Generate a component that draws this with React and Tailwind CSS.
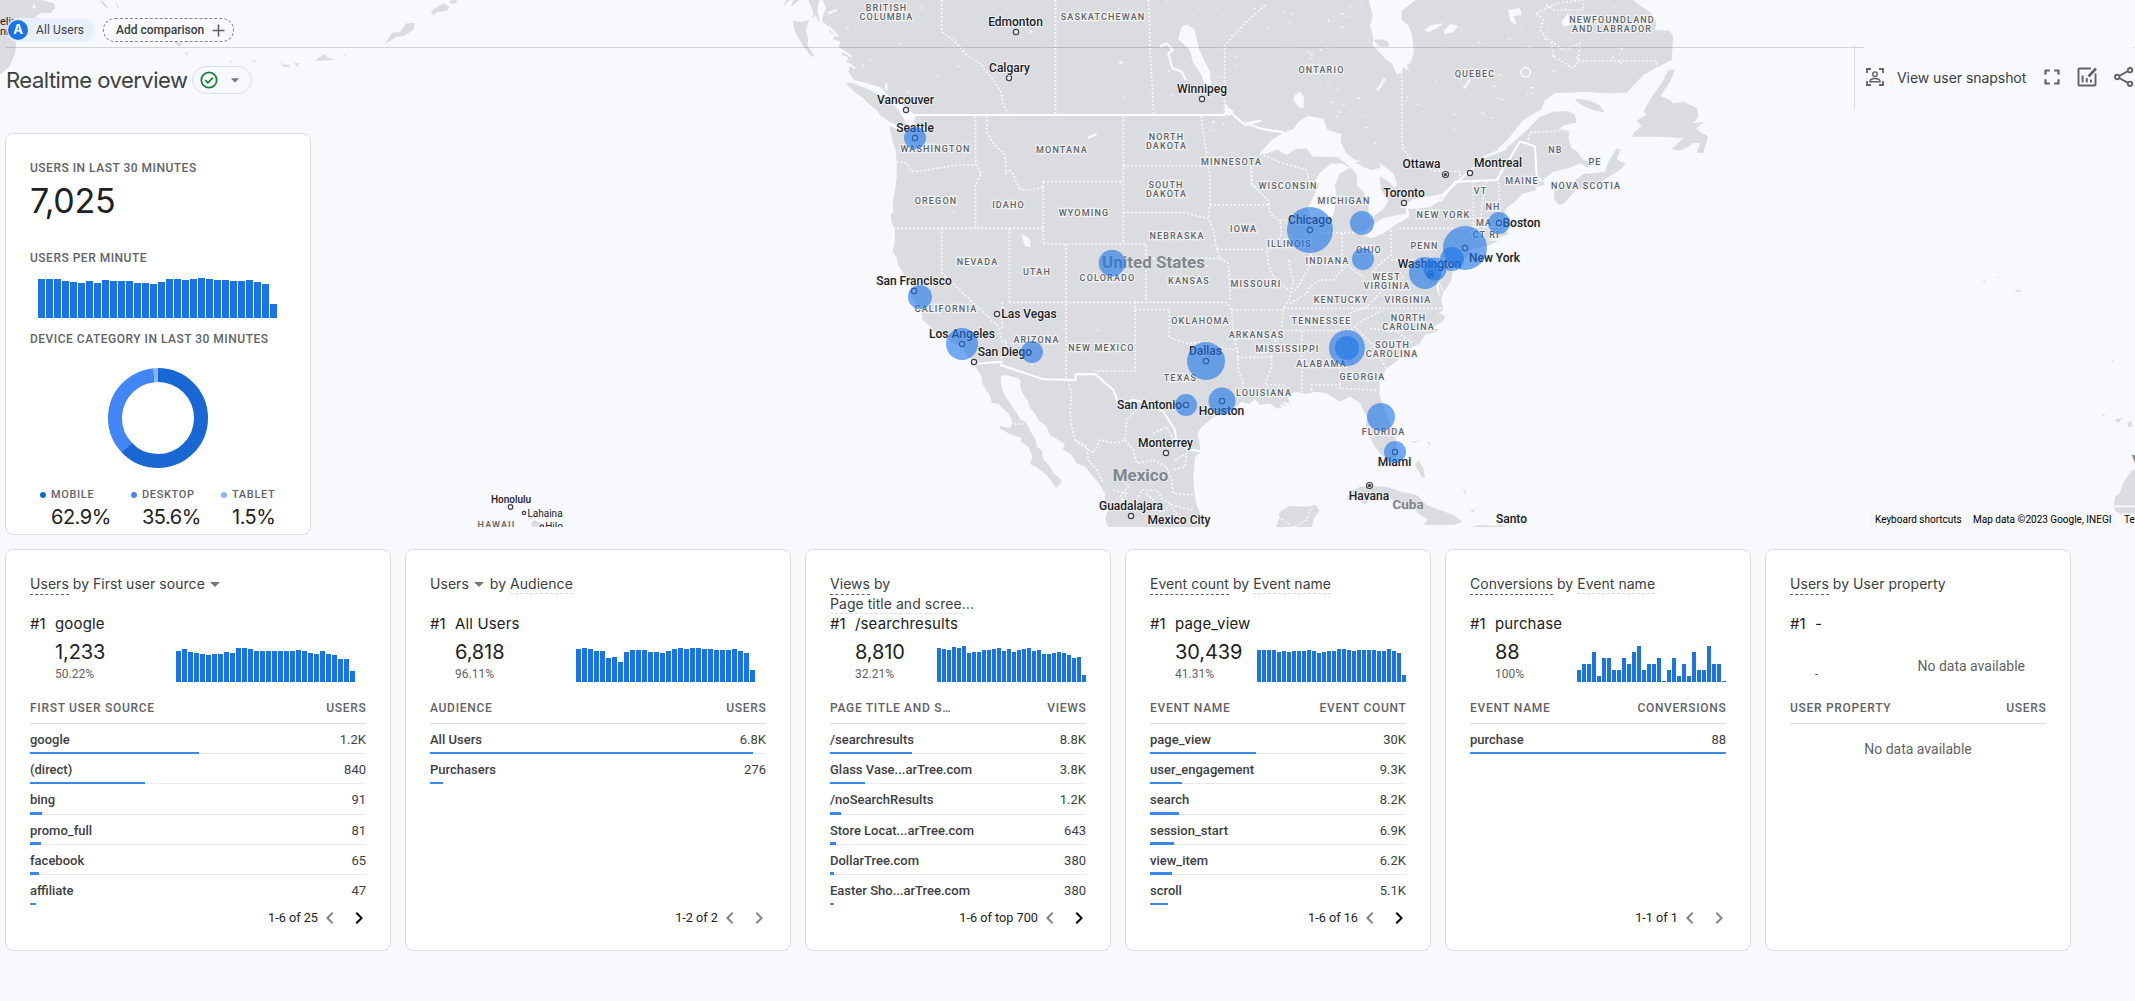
import React from "react";
import { MdChevronLeft, MdChevronRight, MdArrowDropDown, MdFullscreen } from "react-icons/md";

/* Map geometry is stored per tile at triple resolution; each tile has its own origin. */
const TILES = { A: [0, 0], NW: [2340, 0], NE: [3720, 0], SW: [2340, 780], SE: [3720, 780], P: [1260, 0], E: [5100, 0] };

function points(segments) {
  let out = "";
  for (let i = 0; i < segments.length; i += 2) {
    const [ox, oy] = TILES[segments[i]];
    out += segments[i + 1]
      .trim()
      .split(/\s+/)
      .map((p) => {
        const [x, y] = p.split(",").map(Number);
        return `${x + ox},${y + oy} `;
      })
      .join("");
  }
  return out;
}

const LAND = [
  [
    "NW", "128,0 138,25 130,45 126,62 150,85 148,95 165,105 160,118 182,125 175,140 190,150 185,165 205,172 200,188 212,195 205,215 222,240 262,250 300,262 330,290 365,312 390,332 408,346 402,362 408,380 398,398 388,385 370,392 328,378 332,400 340,430 348,455 350,490 350,530 345,570 338,610 340,635 332,645 336,670 344,690 345,720 338,755 350,772 356,810",
    "SW", "355,0 357,18 375,50 390,58 398,75 386,92 400,120 425,160 428,180 455,205 460,214 500,222 515,248 545,258 560,285 580,308 590,325 605,350 608,372 618,390 632,410 635,428 655,432 668,445 690,465 698,490 690,505 658,498 662,508 690,522 712,530 725,535 722,545 745,560 757,590 750,612 775,625 800,645 815,665 828,685 845,665 840,655 820,640 810,620 790,598 785,570 770,560 768,540 752,515 745,500 735,485 722,480 712,462 700,445 680,415 665,385 662,350 672,345 690,348 712,355 722,362 720,375 725,395 745,425 750,445 765,460 775,480 800,500 810,525 835,540 855,552 848,568 875,585 888,608 915,620 940,650 960,675 975,700 975,725 985,750 975,775 985,803 1262,803 1268,780 1250,735 1243,700 1240,650 1245,592 1262,575 1258,545 1252,520 1265,500 1290,480 1300,472 1330,462 1370,440 1385,425 1410,432",
    "SE", "30,430 45,418 60,435 90,430 112,446 125,442 120,432 140,438 125,425 150,430 140,405 165,395 200,402 225,395 260,400 300,425 330,410 360,430 372,455 382,470 376,500 390,530 405,560 420,580 440,598 458,603 470,590 468,540 450,490 432,440 418,405 420,365 440,325 475,300 490,275 540,250 555,225 590,215 595,208 575,205 600,190 615,175 612,165 595,160 610,150 604,120 610,95 596,70 600,110 590,90 590,50 612,95 635,60 638,30 625,10 660,10 690,-20",
    "NE", "690,750 750,735 775,722 745,722 780,710 800,705 810,700 795,695 790,660 798,625 825,605 850,580 890,570 885,560 915,555 908,540 940,515 985,505 1022,490 1040,502 1075,492 1030,480 1012,455 995,445 985,415 990,395 960,385 975,375 1010,368 1005,345 985,333 940,335 900,350 850,400 810,435 780,455 735,470 770,452 810,410 850,360 905,328 915,300 945,280 1040,275 1090,280 1160,278 1210,225 1255,200 1295,180 1300,110 1288,92 1245,90 1250,70 1230,35 1205,20 1180,0",
  ],
  ["NE", "942,570 1000,545 1030,522 1060,520 1095,515 1105,485 1130,445 1143,450 1130,475 1140,485 1158,488 1140,510 1090,540 1040,565 1010,568 990,590 970,612 955,614 942,598"],
  ["NE", "1285,210 1305,208 1290,245 1262,288 1290,300 1300,310 1330,305 1372,325 1375,350 1360,370 1392,365 1368,385 1385,400 1400,405 1403,415 1390,460 1370,458 1380,430 1362,428 1345,440 1320,452 1295,447 1330,415 1260,410 1175,410 1185,395 1205,378 1190,362 1218,345 1212,332 1235,290 1265,250"],
  ["NE", "1003,296 1045,300 1078,315 1095,338 1050,328 1020,312"],
  ["NE", "400,120 430,118 447,128 445,142 415,138"],
  ["NW", "197,249 225,245 240,258 262,265 312,290 350,322 368,350 385,382 365,380 328,365 300,345 290,330 262,308 248,292 225,278"],
  ["NW", "38,62 65,66 88,60 78,90 85,118 82,135 105,172 90,165 68,135 52,108 42,85"],
  ["NW", "0,-2 18,0 10,22 30,-2 40,0 32,22 60,-2 118,-2 112,30 120,70 105,45 95,60 100,38 85,0"],
  ["SE", "118,755 150,738 200,740 228,735 238,752 222,775 215,803 108,803 116,780"],
  ["SE", "318,722 330,695 360,680 390,677 440,680 490,697 530,705 560,735 600,750 640,765 668,785 640,795 550,795 565,778 540,765 520,742 480,735 450,715 400,705 375,735 360,722 345,708"],
  ["SE", "525,615 535,600 550,625 555,652 545,650"],
  ["SE", "512,545 545,541 520,549"],
  ["SE", "555,543 572,548 565,573 568,552"],
  ["SE", "688,752 708,748 700,756"],
  ["SE", "695,800 720,795 760,797 790,795 800,803 695,803"],
  ["SE", "660,688 680,692 676,707 672,693"],
  ["A", "0,0 125,0 162,10 166,24 152,38 120,40 98,58 62,78 50,105 46,160 28,200 0,224"],
  ["A", "300,0 312,18 326,26 310,4"],
  ["A", "345,0 352,22 360,28"],
  ["A", "522,126 548,128 538,141"],
  ["A", "555,156 566,160 560,166"],
  ["A", "758,180 768,184 762,189"],
  ["A", "686,186 698,180 692,188"],
  ["A", "840,186 850,194 870,194 866,202 848,200"],
  ["A", "884,188 898,190 888,202"],
  ["A", "945,182 972,162 982,172 1006,180 960,182"],
  ["A", "1030,163 1038,167 1032,168"],
  ["A", "1155,132 1176,98 1200,96 1220,70 1244,68 1240,90 1212,108 1190,110"],
  ["P", "32,38 50,20 72,10 88,20 80,32 50,36 42,46"],
  ["P", "88,4 98,0 112,0 108,10 92,12"],
  ["P", "335,1565 345,1560 360,1568 372,1580 335,1580"],
  ["E", "1241,1520 1246,1488 1258,1482 1270,1450 1284,1425 1306,1405 1306,1542 1262,1542 1245,1532"],
  ["E", "848,842 860,843 860,846 850,846"],
  ["E", "888,832 894,829 896,835"],
  ["E", "946,870 963,869 962,875 946,875"],
  ["E", "1233,1080 1244,1083 1242,1088"],
  ["E", "1206,1242 1216,1243 1210,1250"],
  ["E", "1243,1260 1268,1251 1255,1269"],
  ["E", "1282,1265 1294,1264 1296,1280 1285,1280"],
];

const WATER = [
  ["NE", "385,-2 398,45 390,80 400,110 398,135 440,180 455,190 470,222 485,218 490,200 508,215 500,195 512,190 522,155 515,100 505,75 485,60 485,32 530,-2"],
  ["NE", "60,460 95,420 130,398 160,388 175,365 205,348 250,357 262,390 305,403 302,425 318,458 345,480 390,492 420,490 460,520 472,555 462,562 440,540 418,530 425,572 445,602 430,628 405,645 398,660 388,652 385,620 370,575 352,558 350,525 330,500 295,472 250,470 218,470 200,445 165,448 140,465 110,448 80,462"],
  ["NE", "215,560 240,518 272,492 305,490 330,503 300,520 285,555 290,598 280,645 262,668 235,678 210,668 203,625 218,595 240,548"],
  ["NE", "362,705 392,678 430,655 470,645 505,640 507,652 470,672 430,700 395,714"],
  ["NE", "478,622 522,597 560,590 600,583 602,600 570,622 520,627"],
  ["NE", "165,285 180,275 192,290 190,325 175,320 160,300"],
  ["NE", "805,30 840,25 845,45 822,48 830,75 812,65"],
  ["NE", "552,90 575,75 612,70 590,85 565,97"],
  ["NE", "610,92 632,72 655,78 640,95 615,103"],
  ["NE", "965,65 985,40 992,75 970,80"],
  ["NW", "1205,80 1222,74 1243,88 1258,150 1290,215 1294,255 1275,258 1265,225 1238,185 1230,150 1195,118"],
  ["NW", "723,703 740,708 752,722 750,742 735,738"],
  ["NW", "1335,308 1345,325 1362,332 1350,348 1335,343"],
  ["NW", "922,412 952,396 948,408 925,416"],
  ["NW", "1012,188 1030,182 1026,192"],
  ["A", "95,22 102,10 108,25"],
];

const DOTTED = [
  ["NW", "485,0 485,95 530,130 560,165 600,190 640,240 665,280 668,310 685,343"],
  ["NW", "827,0 827,343"],
  ["NW", "1105,0 1108,60 1110,150 1117,260 1121,343"],
  ["NW", "1455,15 1390,75 1335,135 1333,343"],
  ["NW", "587,347 587,495"],
  ["NW", "350,485 380,490 395,515 440,510 500,500 540,495 590,495 603,520 585,560 587,595 587,685"],
  ["NW", "620,347 622,400 640,430 675,465 678,520 692,512 705,535 720,568 745,570 790,562"],
  ["NW", "790,545 1030,545"],
  ["NW", "1030,347 1030,730"],
  ["NW", "790,545 790,730"],
  ["NW", "340,685 790,685"],
  ["NW", "790,732 1098,732 1098,775 1325,775"],
  ["NW", "1030,498 1283,498"],
  ["NW", "1263,347 1270,400 1280,460 1283,498 1290,530 1290,615 1285,655"],
  ["NW", "1030,638 1220,638 1250,648 1285,655 1300,690 1310,745 1320,775 1345,790 1352,905"],
  ["NW", "1290,615 1470,615"],
  ["NW", "1310,748 1450,748"],
  ["NW", "485,685 485,818"],
  ["NW", "688,685 688,907"],
  ["NW", "858,732 858,1138"],
  ["NW", "1098,775 1098,907"],
  ["NW", "1412,490 1415,550 1440,570"],
  ["NE", "485,215 487,440 505,470 580,512 660,515 660,540"],
  ["NE", "60,462 130,490 200,510 210,555"],
  ["NE", "35,500 35,555 85,600 90,640 120,665 125,700 105,740 80,750 85,790 100,830 145,870"],
  ["NE", "120,660 205,660"],
  ["NE", "213,700 213,790 180,850 160,880"],
  ["NE", "240,698 375,698"],
  ["NE", "307,700 307,810"],
  ["NE", "453,690 453,765 410,800 390,830"],
  ["NE", "478,685 680,685 700,705"],
  ["NE", "453,780 610,780"],
  ["NE", "697,545 700,600 700,690"],
  ["NE", "740,545 725,620 722,680"],
  ["NE", "775,535 780,640"],
  ["NE", "700,680 780,680"],
  ["NE", "1015,183 1250,183 1250,210"],
  ["NE", "890,40 910,60 900,90 935,130 940,170 1000,205 1015,183 1020,130 970,150 935,125"],
  ["NE", "890,40 950,10 1030,0 1030,30 940,30 915,10"],
  ["NE", "865,420 870,398 930,395 970,390"],
  ["SW", "485,38 560,110 655,200 667,245 680,240 660,310"],
  ["SW", "667,205 667,127"],
  ["SW", "688,127 1340,127 1355,150 1358,210 1372,270 1375,330 1390,370 1385,400"],
  ["SW", "1065,127 1065,333 945,333"],
  ["SW", "1065,148 1168,148 1168,232 1220,250 1280,245 1330,265 1372,270"],
  ["SW", "1355,150 1505,150"],
  ["SW", "1372,292 1475,292"],
  ["SW", "865,360 875,400 870,450 875,500 885,540 920,560 925,600 950,630 970,670"],
  ["SW", "885,540 940,580 960,540 1010,550 1035,540 1040,480 1070,450"],
  ["SW", "1035,540 1060,570 1070,610 1120,600 1160,620 1175,660 1180,700 1240,705"],
  ["SW", "1120,520 1160,500 1185,545"],
  ["SW", "1185,600 1220,580 1215,620 1180,630"],
  ["SW", "1000,690 1040,700 1030,720 1060,740 1085,690 1130,690 1150,720 1190,740 1240,750"],
  ["SW", "1040,740 1020,710 1045,680 1025,660"],
  ["SW", "1100,700 1130,730 1110,745 1150,755 1170,735 1195,770 1225,780"],
  ["SW", "690,492 730,492"],
  ["SE", "145,0 160,60 150,110 130,150 125,200 95,270 95,320 75,375 135,375"],
  ["SE", "130,145 605,145"],
  ["SE", "130,212 330,212 370,180 420,155"],
  ["SE", "185,212 185,395"],
  ["SE", "300,212 300,385 410,390"],
  ["SE", "215,390 215,375 300,375"],
  ["SE", "390,205 470,215 520,250"],
  ["SE", "350,205 410,270 440,330"],
  ["SE", "150,130 200,100 210,80 240,60 280,60 320,15 370,50"],
  ["SE", "330,160 380,140 440,80 490,50"],
  ["SE", "115,770 160,803 200,780 215,740"],
];

const SOLID = [
  ["NW", "408,345 1335,345 1345,325 1360,345 1395,375 1440,362", "NE", "20,370 60,385 95,392 130,396"],
  ["NE", "500,625 505,645"],
  ["NE", "600,605 645,545 770,540 800,490 840,425 860,430 885,440 890,525 905,545"],
  ["SW", "582,312 665,305 662,315 790,358 887,360 887,343 945,342 1000,390 1015,430 1060,420 1110,430 1150,455 1185,510 1190,550 1230,570 1262,573"],
];

const RIVERS = [
  ["NE", "600,590 650,548 735,470 800,445"],
  ["NW", "1140,140 1160,130 1178,150 1165,160 1178,205 1205,215 1218,240"],
  ["NW", "200,240 262,262 330,300 385,350"],
  ["NW", "380,345 392,372 388,395"],
  ["NW", "320,270 318,250"],
  ["NW", "215,170 185,150"],
  ["NW", "225,205 205,190"],
  ["NW", "175,110 145,80"],
  ["NW", "145,40 170,30"],
  ["NE", "672,265 690,238"],
  ["NE", "412,272 435,235"],
];

/* Deterministic scatter of small northern lakes. */
function lakes() {
  let s = 7;
  const rnd = () => {
    s = (s * 16807) % 2147483647;
    return s / 2147483647;
  };
  const zones = [
    [3480, 3720, 5, 420, 46],
    [3720, 4090, 5, 340, 62],
    [4260, 4640, 5, 400, 80],
    [4640, 4960, 10, 250, 46],
    [2520, 3400, 10, 320, 40],
    [4000, 4250, 260, 480, 14],
    [2760, 3700, 360, 1000, 16],
  ];
  const out = [];
  zones.forEach(([x0, x1, y0, y1, n]) => {
    for (let i = 0; i < n; i++) {
      const x = x0 + rnd() * (x1 - x0);
      const y = y0 + rnd() * (y1 - y0);
      const a = rnd() * 18 - 6;
      const b = rnd() * 16 - 8;
      out.push(`M${x.toFixed(0)} ${y.toFixed(0)}l${a.toFixed(0)} ${b.toFixed(0)}l${(b / 2 + 4).toFixed(0)} ${(a / 3 + 2).toFixed(0)}z`);
    }
  });
  return out.join("");
}
const LAKES = lakes();

const STATES = [
  ["BRITISH", 886, 11], ["COLUMBIA", 886, 20], ["SASKATCHEWAN", 1102.5, 20], ["ONTARIO", 1321, 73], ["QUEBEC", 1474.5, 77],
  ["NEWFOUNDLAND", 1611.5, 23], ["AND LABRADOR", 1611.5, 32], ["WASHINGTON", 935, 152], ["MONTANA", 1061.5, 153],
  ["NORTH", 1166, 140], ["DAKOTA", 1166, 149], ["MINNESOTA", 1231, 165], ["SOUTH", 1165.5, 188], ["DAKOTA", 1166, 197],
  ["OREGON", 935.5, 204], ["IDAHO", 1008, 208], ["WYOMING", 1083.5, 216], ["NEBRASKA", 1176.5, 239], ["IOWA", 1243, 232],
  ["NEVADA", 977, 265], ["UTAH", 1036.5, 275], ["COLORADO", 1107, 281], ["KANSAS", 1188.5, 284], ["MISSOURI", 1255.5, 287],
  ["CALIFORNIA", 945.5, 312], ["ARIZONA", 1036, 343], ["NEW MEXICO", 1101, 351], ["OKLAHOMA", 1200, 324], ["ARKANSAS", 1256, 338],
  ["TEXAS", 1180, 381], ["LOUISIANA", 1263.5, 396], ["MISSISSIPPI", 1287, 352], ["ALABAMA", 1321, 367], ["GEORGIA", 1362, 380],
  ["TENNESSEE", 1321, 324], ["KENTUCKY", 1340.5, 303], ["VIRGINIA", 1407.5, 303], ["WEST", 1386, 280], ["VIRGINIA", 1386.5, 289],
  ["NORTH", 1408, 321], ["CAROLINA", 1408, 330], ["SOUTH", 1392, 348], ["CAROLINA", 1391.5, 357], ["FLORIDA", 1383, 435],
  ["WISCONSIN", 1287.5, 189], ["MICHIGAN", 1343.5, 204], ["ILLINOIS", 1289, 247], ["INDIANA", 1327, 264], ["OHIO", 1368.5, 253],
  ["PENN", 1424, 249], ["NEW YORK", 1443, 218], ["VT", 1480, 194], ["NH", 1492.5, 210], ["MA", 1483.5, 226], ["CT", 1479, 238],
  ["RI", 1494, 238], ["MAINE", 1521.5, 184], ["NB", 1555, 153], ["PE", 1594.5, 165], ["NOVA SCOTIA", 1585.5, 189], ["HAWAII", 496, 528],
];

/* name, text centre x, baseline y, marker x, marker y, capital */
const CITIES = [
  ["Edmonton", 1015.5, 26, 1016, 32], ["Calgary", 1009.5, 72, 1009, 78], ["Winnipeg", 1202, 93, 1202, 99],
  ["Vancouver", 905.5, 104, 906, 110], ["Seattle", 915, 132, 915, 138], ["San Francisco", 914, 285, 914, 291],
  ["Las Vegas", 1029, 318, 997, 314], ["Los Angeles", 962, 338, 962, 344], ["San Diego", 1005, 356, 974, 362],
  ["Dallas", 1205.5, 355, 1206, 361], ["San Antonio", 1149.5, 409, 1186, 405], ["Houston", 1221.5, 415, 1222, 401],
  ["Monterrey", 1165.5, 447, 1166, 453], ["Guadalajara", 1131, 510, 1131, 516], ["Mexico City", 1179, 524],
  ["Chicago", 1310, 224, 1310, 230], ["Ottawa", 1421.5, 168, 1445.5, 174.5, true], ["Montreal", 1498, 167, 1470, 173],
  ["Toronto", 1404, 197, 1404, 203], ["Boston", 1521.5, 227, 1499, 223], ["New York", 1494.5, 262, 1465, 248],
  ["Washington", 1429.5, 268, 1430.5, 274.5, true], ["Miami", 1394.5, 466, 1395, 452], ["Havana", 1369, 500, 1369.5, 485.5, true],
  ["Santo", 1511.5, 523],
];

const BUBBLES = [
  [915, 138, 11], [1112, 263, 13.3], [1310, 230, 23], [1362, 223, 12], [1363, 259, 11], [1465, 248, 22], [1452, 259, 12],
  [1499, 223, 11], [1425, 273, 16], [1435, 269, 11.5], [920, 297, 12], [962, 344, 16], [1032, 352, 11], [1206, 361, 19],
  [1186, 405, 11], [1222, 401, 13.5], [1347, 348, 18], [1347, 348, 12], [1381, 417, 14], [1395, 452, 11],
];

function WorldMap() {
  const halo = { paintOrder: "stroke" };
  return (
    <svg className="absolute left-0 top-0 font-['Roboto',sans-serif]" width="2135" height="527" viewBox="0 0 2135 527">
      <g transform="scale(0.33333)" fill="none" strokeLinejoin="round">
        {LAND.map((p, i) => <polygon key={i} points={points(p)} fill="#dadce0" />)}
        <path d={LAKES} fill="#f8f9fc" />
        <circle cx="4577" cy="217" r="14" stroke="#f8f9fc" strokeWidth="5" />
        {WATER.map((p, i) => <polygon key={i} points={points(p)} fill="#f8f9fc" />)}
        <polygon points={points(LAND[4])} fill="#dadce0" />
        <polygon points={points(["NE", "345,486 372,484 420,492 422,503 395,510 368,500"])} fill="#dadce0" />
        {RIVERS.map((p, i) => <polyline key={i} points={points(p)} stroke="#f8f9fc" strokeWidth="7" />)}
        {DOTTED.map((p, i) => <polyline key={i} points={points(p)} stroke="#f8f9fc" strokeWidth="5" strokeDasharray="6 6" />)}
        {SOLID.map((p, i) => <polyline key={i} points={points(p)} stroke="#ffffff" strokeWidth="6" />)}
        <path d="M6341 1519H6405" stroke="#f8f9fc" strokeWidth="5" />
      </g>
      <g fill="#5f6368" fontSize="9" fontWeight="500" letterSpacing="1.15" textAnchor="middle" stroke="#f1f3f4" strokeWidth="2.4" style={halo}>
        {STATES.map(([t, x, y], i) => <text key={i} x={x + 0.5} y={y} style={halo}>{t}</text>)}
      </g>
      <g fill="#80868b" fontWeight="700" textAnchor="middle" stroke="#e8eaed" strokeWidth="1.5">
        <text x="1153.5" y="268" fontSize="17" style={halo}>United States</text>
        <text x="1140.5" y="481" fontSize="17" style={halo}>Mexico</text>
        <text x="1408" y="509" fontSize="13.5" style={halo}>Cuba</text>
        <text x="2132" y="464" fontSize="13.5" textAnchor="start" style={halo}>V</text>
      </g>
      <g fill="none" stroke="#3c4043" strokeWidth="1.2">
        {CITIES.filter((c) => c[3]).map((c, i) => (
          <React.Fragment key={i}>
            <circle cx={c[3]} cy={c[4]} r={c[5] ? 3 : 2.6} fill="#f1f3f4" />
            {c[5] && <circle cx={c[3]} cy={c[4]} r="1" fill="#202124" />}
          </React.Fragment>
        ))}
        <circle cx="510.500" cy="507" r="2.3" />
        <circle cx="524" cy="513" r="1.7" />
        <circle cx="542" cy="526.500" r="1.7" />
      </g>
      <g fill="#202124" fontSize="12" fontWeight="500" textAnchor="middle" stroke="#f1f3f4" strokeWidth="1.6">
        {CITIES.map(([t, x, y], i) => <text key={i} x={x} y={y} style={halo}>{t}</text>)}
      </g>
      <g fill="#202124" fontSize="10" textAnchor="middle">
        <text x="511" y="502.500" fontWeight="500">Honolulu</text>
        <text x="545" y="516.500">Lahaina</text>
        <text x="554" y="530">Hilo</text>
        <text x="0" y="25" textAnchor="start" fontSize="11">elin</text>
        <text x="0" y="35" textAnchor="start" fontSize="11">nu</text>
      </g>
      <g fill="#1a73e8" fillOpacity="0.6">
        {BUBBLES.map(([x, y, r], i) => <circle key={i} cx={x} cy={y} r={r} />)}
      </g>
    </svg>
  );
}

function Spark({ data, bar }) {
  return (
    <div className="flex items-end gap-px">
      {data.map((h, i) => (
        <div key={i} className={`${bar} bg-[#1a73e8]`} style={{ height: h }} />
      ))}
    </div>
  );
}

const GS = "font-['Inter',sans-serif]";

function Donut() {
  const c = 2 * Math.PI * 43;
  const arcs = [["#1967d2", 0, 0.629], ["#4285f4", 0.629, 0.356], ["#8ab4f8", 0.985, 0.015]];
  return (
    <svg width="100" height="100" viewBox="0 0 100 100" className="mx-auto">
      {arcs.map(([col, start, len]) => (
        <circle key={col} cx="50" cy="50" r="43" fill="none" stroke={col} strokeWidth="14"
          strokeDasharray={`${len * c} ${c}`} transform={`rotate(${start * 360 - 90} 50 50)`} />
      ))}
    </svg>
  );
}

function Label({ children, className = "" }) {
  return <div className={`whitespace-nowrap text-[12px] font-medium leading-4 tracking-[0.5px] text-[#5f6368] ${className}`}>{children}</div>;
}

function UsersCard() {
  const legend = [["MOBILE", "62.9%", "bg-[#1967d2]", "w-[91px]"], ["DESKTOP", "35.6%", "bg-[#4285f4]", "w-[90px]"], ["TABLET", "1.5%", "bg-[#8ab4f8]", "w-[60px]"]];
  return (
    <section className="h-[402px] w-[306px] rounded-lg border border-[#dadce0] bg-white px-6 pt-[26px]">
      <Label>USERS IN LAST 30 MINUTES</Label>
      <div className={`mt-[5px] h-10 text-[34px] leading-10 tracking-[-0.3px] text-[#202124] ${GS}`}>7,025</div>
      <Label className="mt-[29px]">USERS PER MINUTE</Label>
      <div className="mt-3 pl-2">
        <Spark bar="w-[7px]" data={[39, 39, 39, 37, 36, 35, 37, 35, 38, 37, 37, 37, 35, 35, 34, 36, 39, 39, 38, 39, 40, 39, 38, 38, 37, 37, 38, 36, 34, 14]} />
      </div>
      <Label className="mt-[13px]">DEVICE CATEGORY IN LAST 30 MINUTES</Label>
      <div className="mt-[20.5px]"><Donut /></div>
      <div className="mt-[19px] flex pl-[10px]">
        {legend.map(([n, v, dot, w]) => (
          <div key={n} className={w}>
            <div className="flex items-center gap-[5px]">
              <span className={`size-1.5 rounded-full ${dot}`} />
              <span className="text-[11px] font-medium leading-4 tracking-[0.65px] text-[#5f6368]">{n}</span>
            </div>
            <div className={`mt-[2px] pl-[11px] text-[20px] leading-6 tracking-[-0.5px] text-[#202124] ${GS}`}>{v}</div>
          </div>
        ))}
      </div>
    </section>
  );
}

function Term({ children, faint }) {
  return (
    <span className={`-mb-0.5 inline-block box-content border-b border-dashed align-top leading-5 ${faint ? "h-[19px] border-[#dadce0]" : "h-5 border-[#5f6368]"}`}>{children}</span>
  );
}

function Title({ children }) {
  return <div className={`h-10 whitespace-nowrap text-[14px] leading-5 tracking-[0.04px] text-[#3c4043] ${GS}`}>{children}</div>;
}

function MetricCard({ width, title, name, value, pct, bars, bar = "w-1", cols, rows, pager, more }) {
  return (
    <section className={`flex h-[402px] shrink-0 flex-col rounded-lg border border-[#dadce0] bg-white px-6 pt-6 ${width}`}>
      <Title>{title}</Title>
      <div className={`flex h-5 whitespace-nowrap text-[15px] leading-5 text-[#202124] ${GS}`}>
        <span className="w-[25px]">#1</span>
        <span className="tracking-[0.15px]">{name}</span>
      </div>
      <div className="flex h-12 items-end justify-between">
        <div className="self-start pl-[25px] pt-1.5">
          <div className={`h-6 text-[20px] leading-6 tracking-[-0.1px] text-[#202124] ${GS}`}>{value}</div>
          <div className={`mt-[2px] text-[12px] leading-4 text-[#5f6368] ${bars ? "" : "-mt-px"}`}>{pct}</div>
        </div>
        {bars ? (
          <div className={bar === "w-[5px]" ? "pr-[11px]" : ""}><Spark bar={bar} data={bars} /></div>
        ) : (
          <div className="mb-[6px] mr-[21px] text-[14px] leading-5 text-[#5f6368]">No data available</div>
        )}
      </div>
      <div className="mt-[18px] flex h-6 justify-between border-b border-[#dadce0] text-[12px] font-medium leading-4 tracking-[0.7px] text-[#5f6368]">
        <span>{cols[0]}</span>
        <span className="-mr-[0.5px]">{cols[1]}</span>
      </div>
      {rows.map(([n, v, p], i) => (
        <div key={n} className="flex h-[30.2px] flex-col justify-between">
          <div className="flex justify-between pt-1.5 text-[13px] leading-5">
            <span className="font-medium text-[#3c4043]">{n}</span>
            <span className="text-[#3c4043]">{v}</span>
          </div>
          <div className={`flex h-[3px] items-end border-b ${i < rows.length - 1 ? "border-[#e8eaed]" : "border-transparent"}`}>
            <div className="-mb-px h-[2.5px] shrink-0 bg-[#1a73e8]/85" style={{ width: `${p}%` }} />
          </div>
        </div>
      ))}
      {rows.length === 0 && <div className="mt-[15px] text-center text-[14px] leading-5 text-[#5f6368]">No data available</div>}
      {pager && (
        <div className="mb-[20px] -mr-[5px] mt-auto flex h-6 items-center justify-end text-[12.7px] text-[#202124]">
          <span>{pager}</span>
          <MdChevronLeft className="size-6 text-[#80868b]" />
          <MdChevronRight className={`ml-[5px] size-6 ${more ? "text-black" : "text-[#80868b]"}`} />
        </div>
      )}
    </section>
  );
}

const Caret = () => <span className="mb-[2px] ml-[5px] mr-[2px] inline-block border-x-[5px] border-t-[5px] border-x-transparent border-t-[#757575]" />;

export default function App() {
  return (
    <div className="relative h-[1001px] w-[2135px] overflow-hidden bg-[#f8f9fc] font-['Roboto',sans-serif]">
      <WorldMap />
      <div className="relative flex h-[549px] flex-col pl-[5px]">
        <div className="flex h-[47px] shrink-0 items-end gap-2 pb-[5px] pl-[2px] text-[12px]">
          <div className="flex h-6 w-[88px] items-center gap-2 rounded-full bg-[#e8f0fe] pl-px text-[#3c4043]">
            <span className={`flex size-5 items-center justify-center rounded-full bg-[#1a73e8] text-[13px] font-bold text-white ${GS}`}>A</span>
            <span className="tracking-[0.1px]">All Users</span>
          </div>
          <div className="flex h-6 w-[131px] items-center justify-between rounded-full border border-dashed border-[#80868b] pl-[12px] pr-[8px] font-medium text-[#3c4043]">
            <span>Add comparison</span>
            <svg width="13" height="13" viewBox="0 0 13 13" stroke="#5f6368" strokeWidth="1.6"><path d="M6.500 .5v12M.5 6.500h12" /></svg>
          </div>
        </div>
        <div className="flex shrink-0">
          <div className="ml-px h-px w-[1858px] bg-black/15" />
          <div className="ml-auto h-px w-[2px] bg-[#dadce0]" />
        </div>
        <div className="flex h-[85px] shrink-0 justify-between">
          <div className="mt-[18px] flex h-7 items-center pl-[1px]">
            <h1 className={`w-[186px] whitespace-nowrap text-[22px] leading-7 tracking-[-0.5px] text-[#3c4043] ${GS}`}>Realtime overview</h1>
            <div className="flex h-7 w-[60px] shrink-0 items-center justify-between rounded-full border border-[#dadce0] pl-[7px] pr-1.5">
              <svg width="18" height="18" viewBox="0 0 18 18" fill="none" stroke="#188038" strokeWidth="1.700"><circle cx="9" cy="9" r="7.700" /><path d="M5.200 9.200l2.700 2.700 5-5.200" /></svg>
              <MdArrowDropDown className="size-5 text-[#757575]" />
            </div>
          </div>
          <div className="-mt-[3px] flex h-16 w-[281px] items-center border-l border-[#dadce0] pl-[11px] text-[#5f6368]">
            <svg className="shrink-0" width="18" height="18" viewBox="0 0 18 18" fill="none" stroke="currentColor" strokeWidth="1.800">
              <path d="M1 5V1h4M13 1h4v4M17 13v4h-4M5 17H1v-4" />
              <circle cx="9" cy="6.200" r="2.300" strokeWidth="1.400" />
              <path d="M3.900 13.700c0-2.600 3-3.200 5.100-3.200s5.100.6 5.100 3.200z" strokeWidth="1.400" />
            </svg>
            <span className={`ml-[13px] w-[129px] shrink-0 whitespace-nowrap text-[14px] tracking-[-0.05px] text-[#3c4043] ${GS}`}>View user snapshot</span>
            <MdFullscreen className="ml-[13px] size-[26px] shrink-0" />
            <svg className="ml-[12px] shrink-0" width="21" height="20" viewBox="0 0 21 20" fill="none" stroke="currentColor" strokeWidth="1.900">
              <path d="M14 1.500H2.500a1 1 0 0 0-1 1v15a1 1 0 0 0 1 1h15a1 1 0 0 0 1-1V6.500" />
              <path d="M5.600 8.500v7M9.800 11v4.500M14 12.500v3" />
              <path d="M11.500 9.500l7.500-8" strokeWidth="2.600" />
            </svg>
            <svg className="ml-[16px] shrink-0" width="20" height="20" viewBox="0 0 20 20" fill="none" stroke="currentColor" strokeWidth="1.900">
              <circle cx="3.200" cy="10" r="2.200" /><circle cx="16" cy="3.200" r="2.200" /><circle cx="16" cy="16.800" r="2.200" />
              <path d="M5.200 9l8.800-4.800M5.200 11l8.800 4.800" />
            </svg>
          </div>
        </div>
        <UsersCard />
        <div className="absolute right-0 top-[513px] flex h-[14px] gap-px text-[10px] leading-[14px] text-black">
          <span className="w-[97px] whitespace-nowrap bg-[#f5f5f5]/80 pl-[5px]">Keyboard shortcuts</span>
          <span className="w-[150px] whitespace-nowrap bg-[#f5f5f5]/80 pl-[5px]">Map data ©2023 Google, INEGI</span>
          <span className="ml-[3px] w-[13px] overflow-hidden bg-[#f5f5f5]/80 pl-[2px]">Te</span>
        </div>
      </div>

      <main className="relative flex gap-[14px] pl-[5px]">
        <MetricCard width="w-[386px]" title={<><Term>Users</Term> by First user source<Caret /></>} name="google" value="1,233" pct="50.22%" bar="w-[5px]"
          bars={[31, 33, 30, 29, 28, 27, 28, 28, 30, 29, 34, 34, 33, 31, 31, 31, 31, 31, 31, 31, 32, 31, 29, 28, 31, 28, 27, 23, 23, 11]}
          cols={["FIRST USER SOURCE", "USERS"]} pager="1-6 of 25" more
          rows={[["google", "1.2K", 50.2], ["(direct)", "840", 34.2], ["bing", "91", 3.7], ["promo_full", "81", 3.3], ["facebook", "65", 2.6], ["affiliate", "47", 1.9]]} />
        <MetricCard width="w-[386px]" title={<>Users<Caret /> by <Term faint>Audience</Term></>} name="All Users" value="6,818" pct="96.11%" bar="w-[5px]"
          bars={[33, 34, 33, 31, 31, 24, 25, 20, 30, 32, 32, 32, 30, 30, 29, 31, 33, 34, 33, 34, 34, 33, 33, 32, 32, 32, 33, 31, 29, 12]}
          cols={["AUDIENCE", "USERS"]} pager="1-2 of 2"
          rows={[["All Users", "6.8K", 96.1], ["Purchasers", "276", 3.9]]} />
        <MetricCard width="w-[306px]" title={<><Term>Views</Term> by<br /><Term faint>Page title and scree</Term>…</>} name="/searchresults" value="8,810" pct="32.21%"
          bars={[34, 33, 32, 35, 34, 36, 29, 30, 30, 32, 32, 33, 34, 31, 33, 30, 32, 33, 34, 31, 32, 28, 28, 29, 30, 29, 27, 24, 25, 7]}
          cols={["PAGE TITLE AND S…", "VIEWS"]} pager="1-6 of top 700" more
          rows={[["/searchresults", "8.8K", 32.2], ["Glass Vase...arTree.com", "3.8K", 13.8], ["/noSearchResults", "1.2K", 4.3], ["Store Locat...arTree.com", "643", 2.4], ["DollarTree.com", "380", 1.4], ["Easter Sho...arTree.com", "380", 1.4]]} />
        <MetricCard width="w-[306px]" title={<><Term>Event count</Term> by <Term faint>Event name</Term></>} name="page_view" value="30,439" pct="41.31%"
          bars={[32, 32, 32, 32, 30, 31, 30, 31, 31, 31, 32, 31, 29, 30, 31, 31, 33, 33, 32, 31, 32, 32, 32, 32, 31, 31, 33, 31, 29, 7]}
          cols={["EVENT NAME", "EVENT COUNT"]} pager="1-6 of 16" more
          rows={[["page_view", "30K", 41.3], ["user_engagement", "9.3K", 12.6], ["search", "8.2K", 11.3], ["session_start", "6.9K", 9.4], ["view_item", "6.2K", 8.5], ["scroll", "5.1K", 7.1]]} />
        <MetricCard width="w-[306px]" title={<><Term>Conversions</Term> by <Term faint>Event name</Term></>} name="purchase" value="88" pct="100%"
          bars={[12, 18, 18, 30, 6, 24, 24, 12, 12, 24, 18, 30, 36, 12, 18, 18, 24, 1, 12, 24, 6, 18, 6, 30, 12, 12, 36, 18, 18, 1]}
          cols={["EVENT NAME", "CONVERSIONS"]} pager="1-1 of 1"
          rows={[["purchase", "88", 100]]} />
        <MetricCard width="w-[306px]" title={<><Term>Users</Term> by User property</>} name="-" value="" pct="-" cols={["USER PROPERTY", "USERS"]} rows={[]} />
      </main>
    </div>
  );
}
